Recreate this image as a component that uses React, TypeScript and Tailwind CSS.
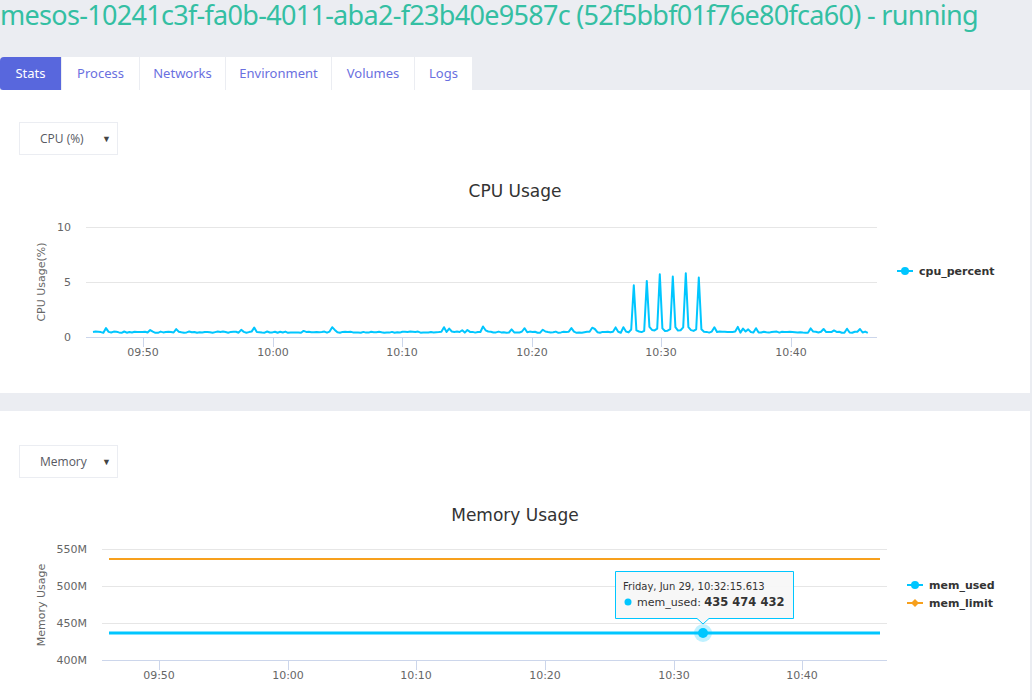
import React from "react";

const CYAN = "#00c6ff";
const ORANGE = "#f7a01d";
const GRID = "#e6e6e6";
const AXIS = "#ccd6eb";
const CHART_FONT = "'DejaVu Sans', Verdana, sans-serif";

// deterministic noise
function rng(seed: number) {
  let s = seed;
  return () => {
    s = (s * 1103515245 + 12345) % 2147483648;
    return s / 2147483648;
  };
}

function cpuPoints(): string {
  const r = rng(42);
  const spikes: Record<number, number> = { 633: 4.7, 646: 5.1, 659: 5.7, 672: 5.5, 685: 5.8, 698: 5.4 };
  const pts: string[] = [];
  for (let x = 93; x <= 870; x += 2.6) {
    const px = Math.round(x);
    let v = 0.38 + r() * 0.12;
    if (r() > 0.86) v += 0.15 + r() * 0.35;
    for (const k of Object.keys(spikes)) {
      const sx = Number(k);
      if (Math.abs(px - sx) <= 1) v = spikes[sx];
      else if (Math.abs(px - sx) <= 3) v = 0.5 + r() * 0.3;
    }
    if (px >= 648 && px <= 700 && v < 1) v += 0.15;
    pts.push(`${x.toFixed(1)},${(182 - v * 11).toFixed(1)}`);
  }
  return pts.join(" ");
}

function Select({ label }: { label: string }) {
  return (
    <div className="ml-[19px] flex h-[33px] w-[99px] items-center border border-[#ebedf2] bg-white pl-[20px] pr-[6px] text-[12px] text-[#575962] [font-family:'Open_Sans',sans-serif]">
      <span className="flex-1">{label}</span>
      <span className="text-[9px] text-[#444]">▼</span>
    </div>
  );
}

function XAxis({ ticks, y, left, right }: { ticks: [number, string][]; y: number; left: number; right: number }) {
  return (
    <g>
      <line x1={left} x2={right} y1={y + 0.5} y2={y + 0.5} stroke={AXIS} />
      {ticks.map(([x, t]) => (
        <g key={t}>
          <line x1={x + 0.5} x2={x + 0.5} y1={y} y2={y + 10} stroke={AXIS} />
          <text x={x} y={y + 19} textAnchor="middle" fontSize="11" fill="#666">
            {t}
          </text>
        </g>
      ))}
    </g>
  );
}

function CpuChart() {
  const ticks: [number, string][] = [
    [143, "09:50"],
    [273, "10:00"],
    [402, "10:10"],
    [532, "10:20"],
    [661, "10:30"],
    [791, "10:40"],
  ];
  return (
    <svg width="1030" height="238" style={{ fontFamily: CHART_FONT }} className="block">
      <text x="515" y="42" textAnchor="middle" fontSize="17" fill="#333">
        CPU Usage
      </text>
      {[72, 127].map((y) => (
        <line key={y} x1="86" x2="877" y1={y + 0.5} y2={y + 0.5} stroke={GRID} />
      ))}
      {[
        [72, "10"],
        [127, "5"],
        [182, "0"],
      ].map(([y, t]) => (
        <text key={t} x="71" y={Number(y) + 4} textAnchor="end" fontSize="11" fill="#666">
          {t}
        </text>
      ))}
      <text x="0" y="0" transform="translate(45,127) rotate(-90)" textAnchor="middle" fontSize="11" fill="#666">
        CPU Usage(%)
      </text>
      <XAxis ticks={ticks} y={182} left={86} right={877} />
      <polyline points={cpuPoints()} fill="none" stroke={CYAN} strokeWidth="2" strokeLinejoin="round" />
      <line x1="897" x2="913" y1="116" y2="116" stroke={CYAN} strokeWidth="2" />
      <circle cx="905" cy="116" r="4" fill={CYAN} />
      <text x="919" y="120" fontSize="11" fontWeight="bold" fill="#333">
        cpu_percent
      </text>
    </svg>
  );
}

function MemChart() {
  const ticks: [number, string][] = [
    [159, "09:50"],
    [288, "10:00"],
    [416, "10:10"],
    [545, "10:20"],
    [674, "10:30"],
    [802, "10:40"],
  ];
  const grid: [number, string][] = [
    [71, "550M"],
    [108, "500M"],
    [145, "450M"],
    [182, "400M"],
  ];
  return (
    <svg width="1030" height="223" style={{ fontFamily: CHART_FONT }} className="block">
      <text x="515" y="43" textAnchor="middle" fontSize="17" fill="#333">
        Memory Usage
      </text>
      {grid.slice(0, 3).map(([y]) => (
        <line key={y} x1="102" x2="887" y1={y + 0.5} y2={y + 0.5} stroke={GRID} />
      ))}
      {grid.map(([y, t]) => (
        <text key={t} x="87" y={y + 4} textAnchor="end" fontSize="11" fill="#666">
          {t}
        </text>
      ))}
      <text x="0" y="0" transform="translate(45,127) rotate(-90)" textAnchor="middle" fontSize="11" fill="#666">
        Memory Usage
      </text>
      <XAxis ticks={ticks} y={182} left={102} right={887} />
      <line x1="109" x2="880" y1="81" y2="81" stroke={ORANGE} strokeWidth="2" />
      <line x1="109" x2="880" y1="155" y2="155" stroke={CYAN} strokeWidth="3" />
      <circle cx="703" cy="155" r="9" fill={CYAN} opacity="0.25" />
      <circle cx="703" cy="155" r="5" fill={CYAN} />

      {/* tooltip */}
      <path
        d="M615.5 93.5 H793.5 V140.5 H709 L703 146 L697 140.5 H615.5 Z"
        fill="#f7f7f7"
        fillOpacity="0.95"
        stroke={CYAN}
        strokeWidth="1"
      />
      <text x="623" y="112" fontSize="10" fill="#333">
        Friday, Jun 29, 10:32:15.613
      </text>
      <circle cx="628" cy="124" r="3.5" fill={CYAN} />
      <text x="637" y="128" fontSize="11" fill="#333">
        mem_used: <tspan fontWeight="bold" fontSize="11.5">435 474 432</tspan>
      </text>

      <line x1="907" x2="923" y1="107" y2="107" stroke={CYAN} strokeWidth="2" />
      <circle cx="915" cy="107" r="4" fill={CYAN} />
      <text x="929" y="111" fontSize="11" fontWeight="bold" fill="#333">
        mem_used
      </text>
      <line x1="907" x2="923" y1="125" y2="125" stroke={ORANGE} strokeWidth="2" />
      <path d="M915 121 L919 125 L915 129 L911 125 Z" fill={ORANGE} />
      <text x="929" y="129" fontSize="11" fontWeight="bold" fill="#333">
        mem_limit
      </text>
    </svg>
  );
}

const TABS: [string, string][] = [
  ["Stats", "w-[61px]"],
  ["Process", "w-[78px]"],
  ["Networks", "w-[86px]"],
  ["Environment", "w-[106px]"],
  ["Volumes", "w-[83px]"],
  ["Logs", "w-[58px]"],
];

export default function App() {
  return (
    <div className="h-[700px] w-[1032px] overflow-hidden bg-[#ebedf2]">
      <h1 className="whitespace-nowrap text-[27px] leading-[30px] tracking-[-0.7px] text-[#34bfa3] [font-family:'Noto_Sans',sans-serif]">
        mesos-10241c3f-fa0b-4011-aba2-f23b40e9587c (52f5bbf01f76e80fca60) - running
      </h1>

      <div className="mt-[27px] flex h-[33px] [font-family:'Noto_Sans',sans-serif]">
        {TABS.map(([t, w], i) => (
          <div
            key={t}
            className={`${w} flex items-center justify-center text-[13px] ${
              i === 0
                ? "rounded-tl-[4px] rounded-bl-[3px] bg-[#5867dd] text-white"
                : "border-l border-[#ebedf2] bg-white text-[#6a70e0]"
            }`}
          >
            {t}
          </div>
        ))}
      </div>

      <div className="h-[303px] w-[1030px] bg-white pt-[32px]">
        <Select label="CPU (%)" />
        <CpuChart />
      </div>

      <div className="mt-[18px] h-[300px] w-[1030px] bg-white pt-[34px]">
        <Select label="Memory" />
        <MemChart />
      </div>
    </div>
  );
}
